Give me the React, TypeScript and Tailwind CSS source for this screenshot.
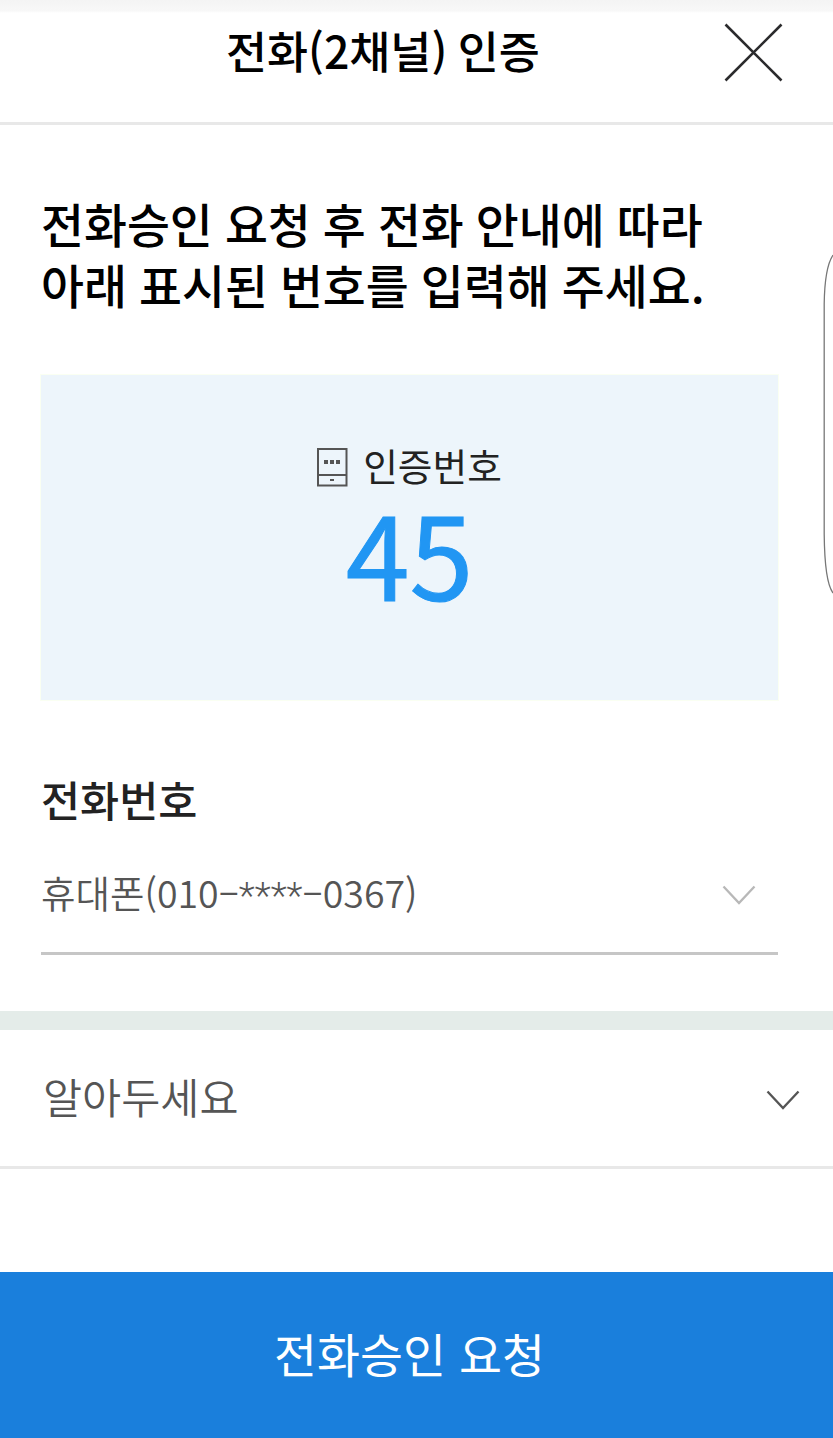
import React, { useState } from 'react'

const PhoneIcon = () => (
  <svg width="31" height="39" viewBox="0 0 31 39" fill="none" className="shrink-0">
    <rect x="1" y="1" width="28.5" height="36.5" stroke="#555" strokeWidth="2" />
    <path d="M1 27H30" stroke="#555" strokeWidth="2" />
    <path d="M7 12H11V16H7zM13 12H17V16H13zM19 12H23V16H19zM13 31H17V33H13z" fill="#555" />
  </svg>
)

const Chevron = ({ color }: { color: string }) => (
  <svg width="34" height="21" viewBox="0 0 34 21" fill="none" stroke={color} strokeWidth="2.3">
    <path d="M1.5 1.5L17 18L32.5 1.5" />
  </svg>
)

const Header = () => (
  <header className="flex h-[125px] items-start border-b-3 border-[#e8e8e8] bg-linear-to-b from-[#f4f4f4] from-0% via-[#f8f8f8] via-[11px] to-white to-[13px]">
    <h1 className="ml-[226px] mt-[18px] w-[498px] text-[44.6px] font-medium leading-[64px] text-black [word-spacing:-2px]">
      전화(2채널) 인증
    </h1>
    <button aria-label="닫기" className="mt-[23px]">
      <svg width="59" height="59" viewBox="0 0 59 59" fill="none" stroke="#2b2b2d" strokeWidth="2.6">
        <path d="M1.5 1.5L57.5 57.5M57.5 1.5L1.5 57.5" />
      </svg>
    </button>
  </header>
)

const App = () => {
  const [tail] = useState('0367')

  return (
    <div
      lang="ko"
      className="relative flex h-[1438px] w-[833px] flex-col overflow-hidden whitespace-nowrap bg-white font-['Noto_Sans_CJK_KR',sans-serif]"
    >
      <Header />

      <main className="ml-[41px] flex w-[737px] flex-col">
        <h2 className="mt-[67px] text-[46.7px] font-medium leading-[61px] text-black [word-spacing:-1px]">
          전화승인 요청 후 전화 안내에 따라
          <br />
          아래 표시된 번호를 입력해 주세요.
        </h2>

        {/* Verification code */}
        <section className="mt-[61px] flex h-[325px] flex-col items-center bg-[#edf5fb] outline-1 outline-[#fafff2]">
          <div className="mt-[64px] flex h-14 items-center gap-[15px] text-[37.7px] leading-[56px] text-[#222]">
            <PhoneIcon />
            <span className="pb-1">인증번호</span>
          </div>
          <strong className="-mt-[9px] text-[115px] font-normal leading-[130px] text-[#2196f3] [-webkit-text-stroke:1px_#2196f3]">
            45
          </strong>
        </section>

        {/* Phone number select */}
        <h3 className="mt-[68px] text-[42.5px] font-medium leading-[62px] text-[#222]">전화번호</h3>
        <button className="flex h-[125px] items-center justify-between border-b-3 border-[#c6c6c6] pr-[22px] text-[37.5px] font-[350] leading-[56px] text-[#555]">
          <span className="pt-[5px]">
            휴대폰(010–<span className="font-['Roboto',sans-serif] font-light">****</span>–{tail})
          </span>
          <span className="pt-2">
            <Chevron color="#b8b8b8" />
          </span>
        </button>
      </main>

      <div className="mt-14 h-[19px] bg-[#e4ece9]" />

      <button className="flex h-[139px] items-center justify-between border-b-3 border-[#e8e8e8] pl-[43px] pr-[33px] text-[42.5px] font-[350] leading-[62px] text-[#555]">
        <span className="pb-[5px]">알아두세요</span>
        <span className="pt-1">
          <Chevron color="#555" />
        </span>
      </button>

      <button className="mt-auto flex h-[166px] items-center justify-center bg-[#1a7fdc] pb-[5px] pr-[14px] text-[46.7px] leading-[68px] text-white">
        전화승인 요청
      </button>

      {/* Edge panel handle */}
      <svg className="absolute right-0 top-[250px]" width="10" height="348" viewBox="0 0 10 348" fill="none">
        <path d="M10 5C4 14 1.5 31 1.2 54V284C1.5 314 4 335 10 343" stroke="#777" strokeWidth="1.3" />
      </svg>
    </div>
  )
}

export default App
